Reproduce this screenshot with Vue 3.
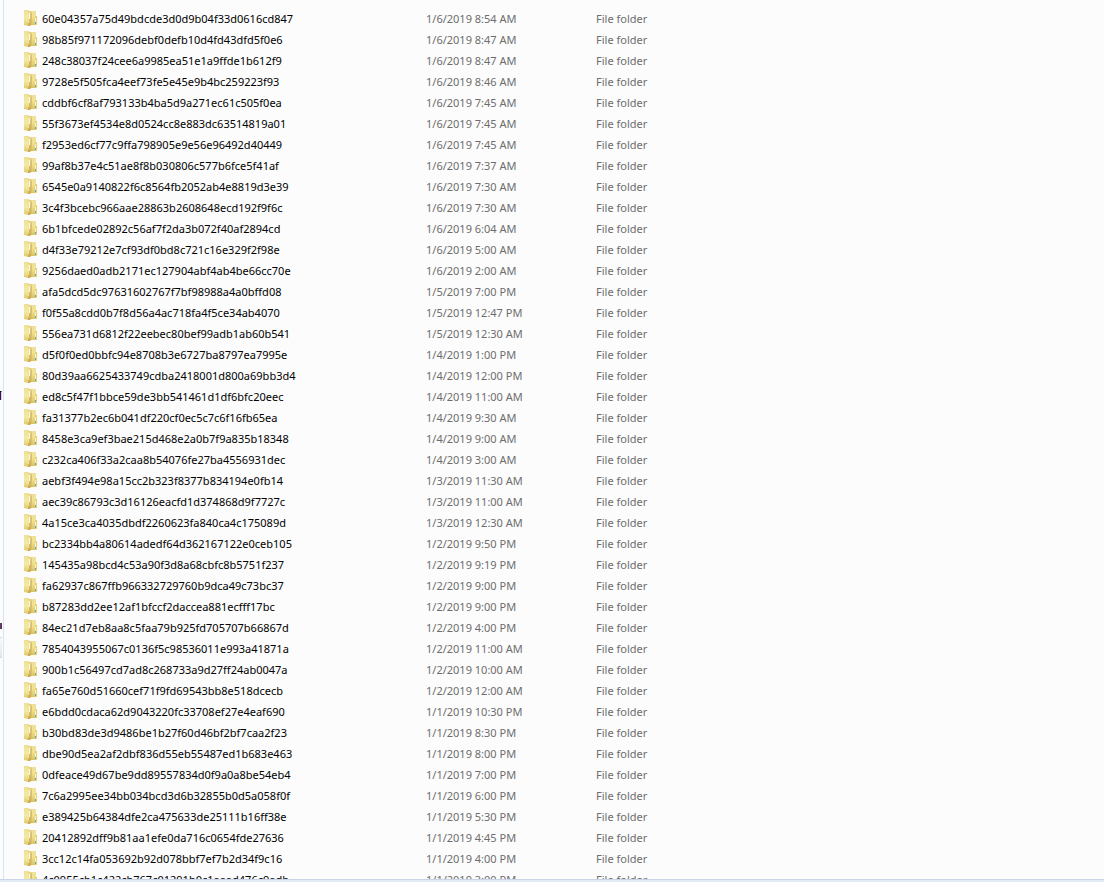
<script setup>
const listing = `
60e04357a75d49bdcde3d0d9b04f33d0616cd847|1/6/2019 8:54 AM
98b85f971172096debf0defb10d4fd43dfd5f0e6|1/6/2019 8:47 AM
248c38037f24cee6a9985ea51e1a9ffde1b612f9|1/6/2019 8:47 AM
9728e5f505fca4eef73fe5e45e9b4bc259223f93|1/6/2019 8:46 AM
cddbf6cf8af793133b4ba5d9a271ec61c505f0ea|1/6/2019 7:45 AM
55f3673ef4534e8d0524cc8e883dc63514819a01|1/6/2019 7:45 AM
f2953ed6cf77c9ffa798905e9e56e96492d40449|1/6/2019 7:45 AM
99af8b37e4c51ae8f8b030806c577b6fce5f41af|1/6/2019 7:37 AM
6545e0a9140822f6c8564fb2052ab4e8819d3e39|1/6/2019 7:30 AM
3c4f3bcebc966aae28863b2608648ecd192f9f6c|1/6/2019 7:30 AM
6b1bfcede02892c56af7f2da3b072f40af2894cd|1/6/2019 6:04 AM
d4f33e79212e7cf93df0bd8c721c16e329f2f98e|1/6/2019 5:00 AM
9256daed0adb2171ec127904abf4ab4be66cc70e|1/6/2019 2:00 AM
afa5dcd5dc97631602767f7bf98988a4a0bffd08|1/5/2019 7:00 PM
f0f55a8cdd0b7f8d56a4ac718fa4f5ce34ab4070|1/5/2019 12:47 PM
556ea731d6812f22eebec80bef99adb1ab60b541|1/5/2019 12:30 AM
d5f0f0ed0bbfc94e8708b3e6727ba8797ea7995e|1/4/2019 1:00 PM
80d39aa6625433749cdba2418001d800a69bb3d4|1/4/2019 12:00 PM
ed8c5f47f1bbce59de3bb541461d1df6bfc20eec|1/4/2019 11:00 AM
fa31377b2ec6b041df220cf0ec5c7c6f16fb65ea|1/4/2019 9:30 AM
8458e3ca9ef3bae215d468e2a0b7f9a835b18348|1/4/2019 9:00 AM
c232ca406f33a2caa8b54076fe27ba4556931dec|1/4/2019 3:00 AM
aebf3f494e98a15cc2b323f8377b834194e0fb14|1/3/2019 11:30 AM
aec39c86793c3d16126eacfd1d374868d9f7727c|1/3/2019 11:00 AM
4a15ce3ca4035dbdf2260623fa840ca4c175089d|1/3/2019 12:30 AM
bc2334bb4a80614adedf64d362167122e0ceb105|1/2/2019 9:50 PM
145435a98bcd4c53a90f3d8a68cbfc8b5751f237|1/2/2019 9:19 PM
fa62937c867ffb966332729760b9dca49c73bc37|1/2/2019 9:00 PM
b87283dd2ee12af1bfccf2daccea881ecfff17bc|1/2/2019 9:00 PM
84ec21d7eb8aa8c5faa79b925fd705707b66867d|1/2/2019 4:00 PM
7854043955067c0136f5c98536011e993a41871a|1/2/2019 11:00 AM
900b1c56497cd7ad8c268733a9d27ff24ab0047a|1/2/2019 10:00 AM
fa65e760d51660cef71f9fd69543bb8e518dcecb|1/2/2019 12:00 AM
e6bdd0cdaca62d9043220fc33708ef27e4eaf690|1/1/2019 10:30 PM
b30bd83de3d9486be1b27f60d46bf2bf7caa2f23|1/1/2019 8:30 PM
dbe90d5ea2af2dbf836d55eb55487ed1b683e463|1/1/2019 8:00 PM
0dfeace49d67be9dd89557834d0f9a0a8be54eb4|1/1/2019 7:00 PM
7c6a2995ee34bb034bcd3d6b32855b0d5a058f0f|1/1/2019 6:00 PM
e389425b64384dfe2ca475633de25111b16ff38e|1/1/2019 5:30 PM
20412892dff9b81aa1efe0da716c0654fde27636|1/1/2019 4:45 PM
3cc12c14fa053692b92d078bbf7ef7b2d34f9c16|1/1/2019 4:00 PM
4c0955cb1c422cb767c01291b0c1aaad476c9adb|1/1/2019 3:00 PM
`

const folders = listing
  .trim()
  .split('\n')
  .map((line) => {
    const [name, modified] = line.split('|')
    return { name, modified }
  })
</script>

<template>
  <div class="explorer">
    <svg class="defs" width="0" height="0" aria-hidden="true">
      <defs>
        <linearGradient id="back" x1="0" y1="0" x2="0" y2="1">
          <stop offset="0" stop-color="#eee09b" />
          <stop offset="0.4" stop-color="#f1e390" />
          <stop offset="1" stop-color="#dfc35c" />
        </linearGradient>
        <linearGradient id="flap" x1="0" y1="0" x2="0" y2="1">
          <stop offset="0" stop-color="#eee092" />
          <stop offset="0.5" stop-color="#f5eaa4" />
          <stop offset="1" stop-color="#e0c768" />
        </linearGradient>
        <linearGradient id="fold" x1="0" y1="0" x2="0" y2="1">
          <stop offset="0" stop-color="#e6d68c" />
          <stop offset="1" stop-color="#ccab4c" />
        </linearGradient>
        <symbol id="folder" viewBox="0 0 13 16">
          <path d="M6 1h6v14H6z" fill="url(#back)" />
          <path d="M11 6h2v9h-2z" fill="#e6cf74" />
          <path d="M11 8h1v4h-1z" fill="#f8f3d2" />
          <path d="M11 12h1v2h-1z" fill="#5ba9c4" />
          <path d="M0 0h5v16L0 15z" fill="url(#flap)" />
          <path d="M4 1h4v13l-2 2H4z" fill="url(#fold)" />
          <path d="M4 2h1v11H4z" fill="#f0e4a4" />
          <path d="M5 3h1v6H5z" fill="#fbf9ec" />
          <path d="M7 3h1v11H7z" fill="#dcc069" />
        </symbol>
      </defs>
    </svg>
    <div class="panes">
      <aside class="tree" aria-hidden="true">
        <span class="letter"></span>
        <span class="dot"></span>
        <span class="selected"></span>
      </aside>
      <main class="files">
        <table>
          <colgroup>
            <col class="col-name" />
            <col class="col-date" />
            <col />
          </colgroup>
          <tbody>
            <tr v-for="folder in folders" :key="folder.name">
              <td class="name">
                <div class="entry">
                  <svg class="icon" width="13" height="16" aria-hidden="true"><use href="#folder" /></svg>
                  <span>{{ folder.name }}</span>
                </div>
              </td>
              <td>{{ folder.modified }}</td>
              <td>File folder</td>
            </tr>
          </tbody>
        </table>
      </main>
    </div>
    <footer class="details"></footer>
  </div>
</template>

<style>
body {
  margin: 0;
  background: #fcfcfc;
}
</style>

<style scoped>
.explorer {
  display: flex;
  flex-direction: column;
  height: 100vh;
  overflow: hidden;
  font-family: "Noto Sans", "Open Sans", sans-serif;
  font-size: 11px;
  color: #6d6d6d;
}
.defs {
  position: absolute;
}
.panes {
  display: flex;
  flex: 1;
  min-height: 0;
}
.tree {
  display: flex;
  flex-direction: column;
  flex: none;
  width: 3px;
  border-right: 1px solid #d6e5f5;
}
.letter {
  width: 1px;
  height: 8px;
  margin-top: 391px;
  border-top: 1px solid #101018;
  border-right: 1px solid #b8dcf4;
  background: #5c0838;
}
.dot {
  width: 1px;
  height: 6px;
  margin-top: 223px;
  border-right: 1px solid #2040a0;
  background: #a03018;
}
.selected {
  width: 2px;
  height: 19px;
  margin-top: 8px;
  border-top: 1px solid #d9d9d9;
  border-bottom: 1px solid #d9d9d9;
  background: linear-gradient(#f8f8f8, #e6e6e6);
}
.files {
  flex: 1;
  min-width: 0;
  padding: 8px 0 0 20px;
  overflow: hidden;
}
table {
  width: 100%;
  table-layout: fixed;
  border-collapse: collapse;
}
.col-name {
  width: 402px;
}
.col-date {
  width: 170px;
}
td {
  padding: 0;
  line-height: 21px;
  white-space: nowrap;
}
.name {
  color: #000;
}
.entry {
  display: flex;
  align-items: center;
  gap: 5px;
}
.icon {
  flex: none;
  margin-bottom: 1px;
}
.details {
  flex: none;
  height: 2px;
  border-top: 1px solid #c9d5e6;
  background: #e4ecf7;
}
</style>
